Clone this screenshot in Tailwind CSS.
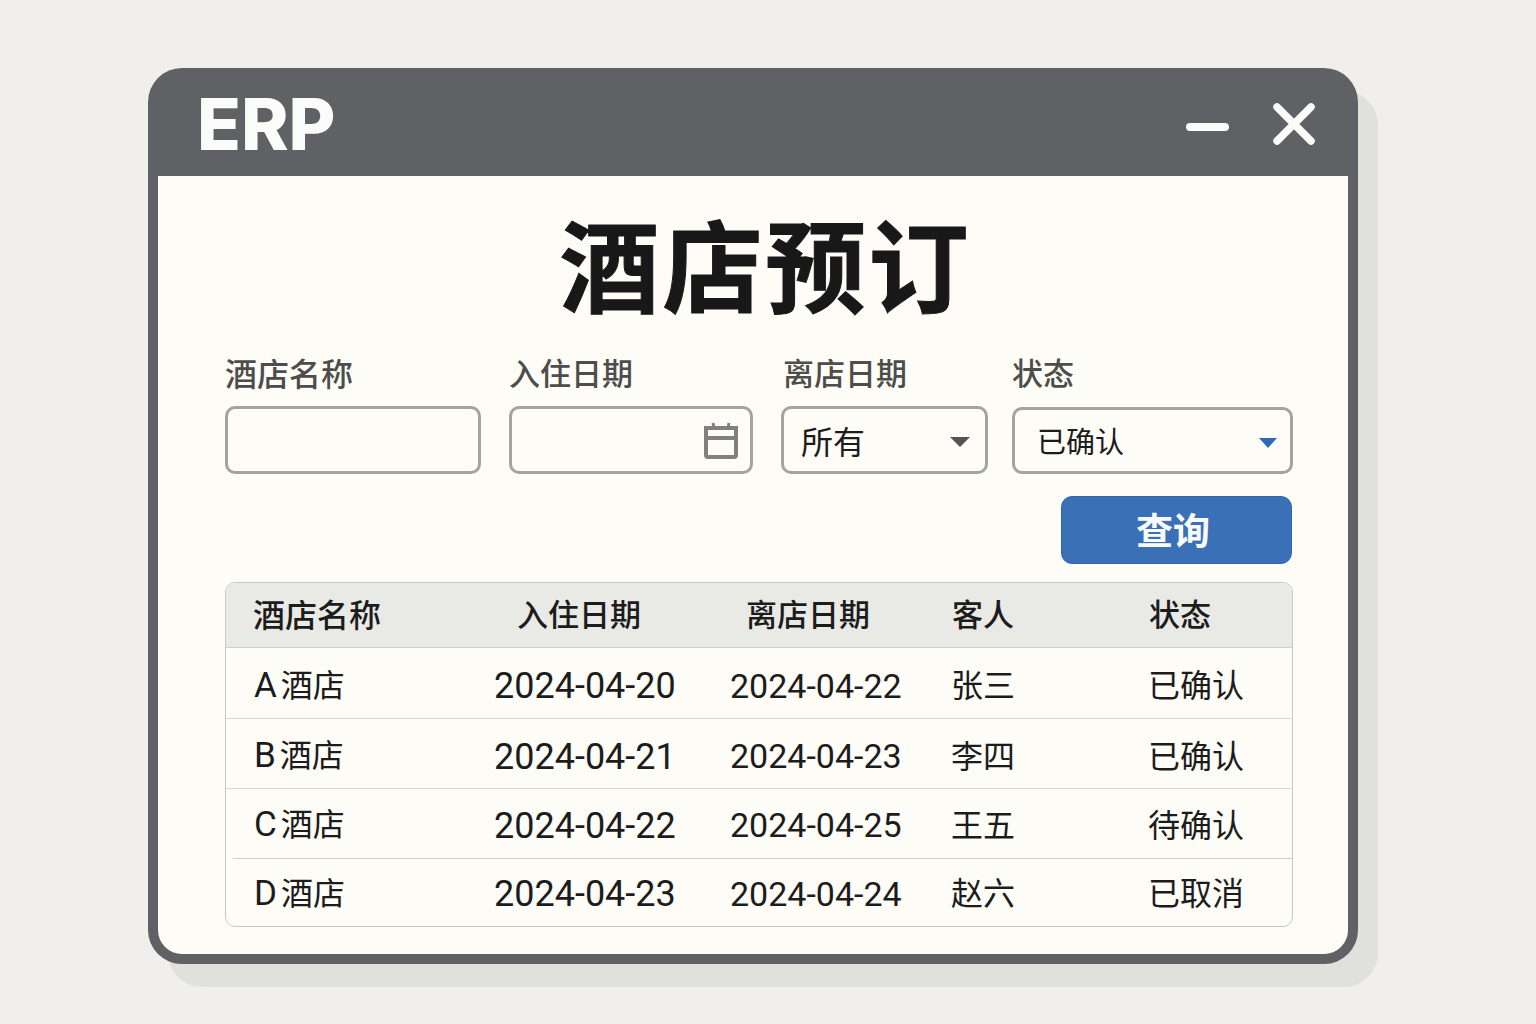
<!DOCTYPE html>
<html lang="zh-CN">
<head>
<meta charset="utf-8">
<script src="https://cdn.jsdelivr.net/npm/@tailwindcss/browser@4"></script>
<title>ERP 酒店预订</title>
</head>
<body class="w-[1536px] h-[1024px] overflow-hidden bg-[#f0efeb] font-['Roboto','Noto_Sans_CJK_SC',sans-serif] text-[#1c1c1c]">
<div class="pt-[68px] pl-[148px]">
  <div class="w-[1210px] h-[896px] rounded-[34px] bg-[#5f6164] pb-[10px] px-[10px] flex flex-col shadow-[20px_23px_0_0_#e0e0dd]">
    <header class="h-[108px] shrink-0 flex items-center justify-between pl-[39px] pr-[32px]">
      <span class="font-['Inter'] font-extrabold text-[72px] leading-none text-[#fbfbf9] mt-[4px]">ERP</span>
      <div class="flex items-center gap-[43px] mt-[4px]">
        <svg class="w-[44px] h-[10px] mt-[6px]" viewBox="0 0 44 10"><path d="M5 5H40" stroke="#fbfbf9" stroke-width="8" stroke-linecap="round"/></svg>
        <svg class="w-[44px] h-[44px] -mt-[1px]" viewBox="0 0 44 44"><path d="M5 5L39 39M39 5L5 39" stroke="#fbfbf9" stroke-width="7.500" stroke-linecap="round"/></svg>
      </div>
    </header>
    <main class="flex-1 bg-[#fdfcf7] rounded-b-[24px] pl-[67px] pr-[55px]">
      <h1 class="h-[180px] pt-[28px] pl-[13px] text-center font-['Noto_Sans_CJK_SC'] font-bold text-[100px] leading-[116px] tracking-[3px] text-[#181818] [-webkit-text-stroke:1px_#181818]">酒店预订</h1>
      <form class="flex">
        <div class="w-[256px] mr-[29px]">
          <div class="h-[36px] text-[32px] leading-[38px] font-medium text-[#4d4d4b]">酒店名称</div>
          <div class="mt-[14px] h-[68px] border-[3px] border-[#a3a3a0] rounded-[10px]"></div>
        </div>
        <div class="w-[244px] mr-[27px] -ml-[1px]">
          <div class="h-[36px] text-[31px] leading-[38px] font-medium text-[#4d4d4b]">入住日期</div>
          <div class="mt-[14px] h-[68px] border-[3px] border-[#a3a3a0] rounded-[10px] flex items-center justify-end pr-[11px]">
            <svg class="w-[36px] h-[40px]" viewBox="0 0 36 40" fill="none" stroke="#80807d" stroke-width="4"><path d="M3 8H33V35Q33 37 31 37H5Q3 37 3 35Z"/><path d="M3 18H33" /><path d="M10 3L11 8M26 3L25 8" stroke-width="3"/></svg>
          </div>
        </div>
        <div class="w-[207px] mr-[24px] ml-[1px]">
          <div class="h-[36px] pl-[2px] text-[31px] leading-[38px] font-medium text-[#4d4d4b]">离店日期</div>
          <div class="mt-[14px] h-[68px] border-[3px] border-[#a3a3a0] rounded-[10px] flex items-center justify-between pl-[17px] pr-[15px]">
            <span class="text-[32px] leading-none text-[#1c1c1c] pt-[5px]">所有</span>
            <svg class="w-[20px] h-[10px] mt-[4px]" viewBox="0 0 20 10"><path d="M0 0H20L10 10Z" fill="#555553"/></svg>
          </div>
        </div>
        <div class="w-[281px]">
          <div class="h-[36px] text-[31px] leading-[38px] font-medium text-[#4d4d4b]">状态</div>
          <div class="mt-[15px] h-[67px] border-[3px] border-[#a3a3a0] rounded-[10px] flex items-center justify-between pl-[22px] pr-[13px]">
            <span class="text-[29px] leading-none text-[#1c1c1c] pt-[5px]">已确认</span>
            <svg class="w-[18px] h-[10px] mt-[4px]" viewBox="0 0 18 10"><path d="M0 0H18L9 10Z" fill="#2f69b3"/></svg>
          </div>
        </div>
      </form>
      <div class="mt-[22px] flex justify-end">
        <button type="button" class="w-[231px] h-[68px] mr-[1px] pr-[7px] pt-[4px] rounded-[11px] bg-[#3a70b5] border border-[#2f65ab] text-[#f9fafa] text-[37px] font-bold leading-none">查询</button>
      </div>
      <div class="mt-[18px] w-[1068px] h-[345px] border border-[#c8c8c4] rounded-[10px] overflow-hidden text-[#1c1c1c]">
        <div class="h-[65px] pt-[2px] bg-[#e9e9e6] border-b border-[#cfcfcb] grid grid-cols-[268px_235px_222px_197px_1fr] items-center text-[31px] font-medium">
          <div class="pl-[27px] text-[32px]">酒店名称</div>
          <div class="pl-[23px]">入住日期</div>
          <div class="pl-[17px]">离店日期</div>
          <div class="pl-[1px]">客人</div>
          <div class="pl-[1px]">状态</div>
        </div>
        <div class="h-[71px] pt-[6px] border-b border-[#d8d8d4] grid grid-cols-[268px_235px_222px_197px_1fr] items-center text-[32px]">
          <div class="pl-[28px]"><span class="text-[35px] mr-[4px]">A</span>酒店</div>
          <div class="text-[36px]">2024-04-20</div>
          <div class="text-[34px] pl-[1px]">2024-04-22</div>
          <div>张三</div>
          <div>已确认</div>
        </div>
        <div class="h-[70px] pt-[6px] border-b border-[#d8d8d4] grid grid-cols-[268px_235px_222px_197px_1fr] items-center text-[32px]">
          <div class="pl-[28px]"><span class="text-[35px] mr-[4px]">B</span>酒店</div>
          <div class="text-[36px]">2024-04-21</div>
          <div class="text-[34px] pl-[1px]">2024-04-23</div>
          <div>李四</div>
          <div>已确认</div>
        </div>
        <div class="h-[69px] pt-[4px] grid grid-cols-[268px_235px_222px_197px_1fr] items-center text-[32px]">
          <div class="pl-[28px]"><span class="text-[35px] mr-[4px]">C</span>酒店</div>
          <div class="text-[36px]">2024-04-22</div>
          <div class="text-[34px] pl-[1px]">2024-04-25</div>
          <div>王五</div>
          <div>待确认</div>
        </div>
        <div class="ml-[7px] h-px bg-[#d0d0cc]"></div>
        <div class="h-[68px] pt-[2px] grid grid-cols-[268px_235px_222px_197px_1fr] items-center text-[32px]">
          <div class="pl-[28px]"><span class="text-[35px] mr-[4px]">D</span>酒店</div>
          <div class="text-[36px]">2024-04-23</div>
          <div class="text-[34px] pl-[1px]">2024-04-24</div>
          <div>赵六</div>
          <div>已取消</div>
        </div>
      </div>
    </main>
  </div>
</div>
</body>
</html>
